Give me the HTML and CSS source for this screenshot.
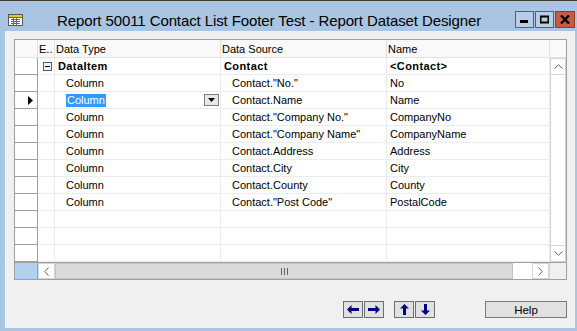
FILE: index.html
```html
<!DOCTYPE html>
<html lang="en">
<head>
  <meta charset="UTF-8" />
  <title>Report Dataset Designer</title>
  <link rel="stylesheet" href="styles.css">
</head>
<body>
  <div class="window">
    <div class="titlebar">
      <svg class="app-icon" width="15" height="12" viewBox="0 0 15 12">
        <rect x="0.5" y="0.5" width="14" height="11" fill="#fff" stroke="#5a5a5a"/>
        <rect x="1" y="1" width="13" height="2" fill="#f2c230"/>
        <path d="M1 3.5h13M3 5.5h9M3 7.5h9M3 9.5h9M5.5 4v7M8.5 4v7" stroke="#6a6a6a" stroke-width="1"/>
      </svg>
      <span class="title">Report 50011 Contact List Footer Test - Report Dataset Designer</span>
      <div class="caption-buttons">
        <span class="cap-btn"><svg width="9" height="9" viewBox="0 0 9 9"><rect x="0" y="5" width="8" height="3" fill="#000"/></svg></span>
        <span class="cap-btn"><svg width="9" height="9" viewBox="0 0 9 9"><rect x="0.5" y="1.5" width="8" height="6" fill="none" stroke="#000" stroke-width="2"/></svg></span>
        <span class="cap-btn close"><svg width="10" height="9" viewBox="0 0 10 9"><path d="M1 0.5l8 8M9 0.5l-8 8" stroke="#000" stroke-width="2.4"/></svg></span>
      </div>
    </div>

    <div class="client">
      <div class="grid">
        <div class="grid-main">
          <div class="grid-rows">
            <div class="row header">
              <div class="cell sel"></div>
              <div class="cell">E..</div>
              <div class="cell">Data Type</div>
              <div class="cell">Data Source</div>
              <div class="cell">Name</div>
            </div>

            <div class="row">
              <div class="cell sel"></div>
              <div class="cell expander">
                <svg width="9" height="9" viewBox="0 0 9 9">
                  <rect x="0.5" y="0.5" width="8" height="8" fill="#eef2f8" stroke="#4b5a78"/>
                  <rect x="2" y="4" width="5" height="1" fill="#000"/>
                </svg>
              </div>
              <div class="cell bold">DataItem</div>
              <div class="cell bold">Contact</div>
              <div class="cell bold">&lt;Contact&gt;</div>
            </div>

            <div class="row">
              <div class="cell sel"></div><div class="cell"></div>
              <div class="cell indent">Column</div>
              <div class="cell indent">Contact."No."</div>
              <div class="cell">No</div>
            </div>

            <div class="row">
              <div class="cell sel current">
                <svg width="5" height="9" viewBox="0 0 5 9"><path d="M0 0l5 4.5L0 9z" fill="#000"/></svg>
              </div>
              <div class="cell"></div>
              <div class="cell indent editing">
                <span class="highlight">Column</span>
                <span class="drop-btn"><svg width="7" height="4" viewBox="0 0 7 4"><path d="M0 0h7L3.5 4z" fill="#000"/></svg></span>
              </div>
              <div class="cell indent">Contact.Name</div>
              <div class="cell">Name</div>
            </div>

            <div class="row">
              <div class="cell sel"></div><div class="cell"></div>
              <div class="cell indent">Column</div>
              <div class="cell indent">Contact."Company No."</div>
              <div class="cell">CompanyNo</div>
            </div>

            <div class="row">
              <div class="cell sel"></div><div class="cell"></div>
              <div class="cell indent">Column</div>
              <div class="cell indent">Contact."Company Name"</div>
              <div class="cell">CompanyName</div>
            </div>

            <div class="row">
              <div class="cell sel"></div><div class="cell"></div>
              <div class="cell indent">Column</div>
              <div class="cell indent">Contact.Address</div>
              <div class="cell">Address</div>
            </div>

            <div class="row">
              <div class="cell sel"></div><div class="cell"></div>
              <div class="cell indent">Column</div>
              <div class="cell indent">Contact.City</div>
              <div class="cell">City</div>
            </div>

            <div class="row">
              <div class="cell sel"></div><div class="cell"></div>
              <div class="cell indent">Column</div>
              <div class="cell indent">Contact.County</div>
              <div class="cell">County</div>
            </div>

            <div class="row">
              <div class="cell sel"></div><div class="cell"></div>
              <div class="cell indent">Column</div>
              <div class="cell indent">Contact."Post Code"</div>
              <div class="cell">PostalCode</div>
            </div>

            <div class="row">
              <div class="cell sel"></div><div class="cell"></div><div class="cell"></div><div class="cell"></div><div class="cell"></div>
            </div>
            <div class="row">
              <div class="cell sel"></div><div class="cell"></div><div class="cell"></div><div class="cell"></div><div class="cell"></div>
            </div>
            <div class="row">
              <div class="cell sel"></div><div class="cell"></div><div class="cell"></div><div class="cell"></div><div class="cell"></div>
            </div>
          </div>

          <div class="vscroll">
            <div class="vs-head"></div>
            <div class="vs-btn"><svg width="9" height="5" viewBox="0 0 9 5"><path d="M0.5 4.5L4.5 0.8L8.5 4.5" fill="none" stroke="#606060"/></svg></div>
            <div class="vs-track"></div>
            <div class="vs-btn"><svg width="9" height="5" viewBox="0 0 9 5"><path d="M0.5 0.5L4.5 4.2L8.5 0.5" fill="none" stroke="#606060"/></svg></div>
          </div>
        </div>

        <div class="hscroll">
          <div class="hs-sel"></div>
          <div class="hs-btn"><svg width="5" height="9" viewBox="0 0 5 9"><path d="M4.5 0.5L0.8 4.5L4.5 8.5" fill="none" stroke="#606060"/></svg></div>
          <div class="hs-thumb"><span class="grip"></span></div>
          <div class="hs-track"></div>
          <div class="hs-btn"><svg width="5" height="9" viewBox="0 0 5 9"><path d="M0.5 0.5L4.2 4.5L0.5 8.5" fill="none" stroke="#606060"/></svg></div>
          <div class="hs-corner"></div>
        </div>
      </div>

      <div class="footer">
        <div class="nav-group">
          <span class="nav-btn"><svg width="12" height="9" viewBox="0 0 12 9"><path d="M0 4.5L4.5 0V3H12V6H4.5V9z" fill="#000080"/></svg></span>
          <span class="nav-btn"><svg width="12" height="9" viewBox="0 0 12 9"><path d="M12 4.5L7.5 0V3H0V6H7.5V9z" fill="#000080"/></svg></span>
        </div>
        <div class="nav-group">
          <span class="nav-btn"><svg width="9" height="11" viewBox="0 0 9 11"><path d="M4.5 0L9 4.5H6V11H3V4.5H0z" fill="#000080"/></svg></span>
          <span class="nav-btn"><svg width="9" height="11" viewBox="0 0 9 11"><path d="M4.5 11L9 6.5H6V0H3V6.5H0z" fill="#000080"/></svg></span>
        </div>
        <span class="help-btn">Help</span>
      </div>
    </div>
  </div>
</body>
</html>
```

FILE: styles.css
```css
:root {
  --frame: #a9c5e2;
  --client: #f0f0f0;
  --grid-line: #a0a0a0;
  --cell-line: #ececec;
  --text: #000000;
}

body {
  margin: 0;
  font-family: "Liberation Sans", Arial, sans-serif;
  color: var(--text);
}

.window {
  width: 577px;
  height: 331px;
  box-sizing: border-box;
  background-color: var(--frame);
  border-top: 1px solid #3c3c3c;
  display: flex;
  flex-direction: column;
  overflow: hidden;
}

.titlebar {
  height: 30px;
  display: flex;
  align-items: center;
}

.app-icon {
  margin-left: 8px;
  margin-top: 7px;
}

.title {
  margin-left: 34px;
  margin-top: 9px;
  font-size: 15px;
  letter-spacing: -0.1px;
  white-space: nowrap;
}

.caption-buttons {
  margin-left: auto;
  margin-right: 2px;
  margin-top: 7px;
  display: flex;
  gap: 1px;
}

.cap-btn {
  width: 19px;
  height: 17px;
  box-sizing: border-box;
  border: 1px solid #4a6183;
  background-color: #b8cee7;
  display: flex;
  align-items: center;
  justify-content: center;
}

.cap-btn.close {
  width: 20px;
  background-color: #c85a45;
  border-color: #8e3b2c;
}

.client {
  flex: 1;
  margin: 0 2px 3px 5px;
  background-color: var(--client);
  padding: 8px 0 0 9px;
  font-size: 11px;
}

.grid {
  width: 551px;
  border: 1px solid var(--grid-line);
  background-color: #fff;
}

.grid-main {
  display: flex;
}

.row {
  display: grid;
  grid-template-columns: 23px 17px 166px 166px 163px;
  height: 17px;
}

.row.header {
  height: 18px;
}

.cell {
  box-sizing: border-box;
  border-right: 1px solid var(--cell-line);
  border-bottom: 1px solid var(--cell-line);
  padding-left: 3px;
  line-height: 16px;
  white-space: nowrap;
  overflow: hidden;
  display: flex;
  align-items: center;
}

.cell.sel {
  border-right-color: var(--grid-line);
  border-bottom-color: var(--grid-line);
  padding-left: 0;
}

.cell.current {
  padding-left: 13px;
}

.cell.indent {
  padding-left: 11px;
}

.cell.bold {
  font-weight: bold;
  letter-spacing: 0.4px;
}

.cell.expander {
  padding-left: 5px;
}

.header .cell {
  background-color: #f9f9f9;
  border-right-color: #e2e2e2;
  border-bottom-color: #e2e2e2;
  padding-left: 1px;
}

.header .cell.sel {
  border-right-color: #e2e2e2;
}

.editing {
  padding-left: 10px;
}

.highlight {
  background-color: #3399ff;
  color: #fff;
  padding: 0 1px;
  line-height: 13px;
}

.drop-btn {
  margin-left: auto;
  margin-right: 1px;
  width: 15px;
  height: 12px;
  box-sizing: border-box;
  border: 1px solid #808080;
  background-color: #e8e8e8;
  display: flex;
  align-items: center;
  justify-content: center;
}

.vscroll {
  width: 16px;
  display: flex;
  flex-direction: column;
}

.vs-head {
  height: 18px;
  box-sizing: border-box;
  background-color: #f9f9f9;
  border-bottom: 1px solid #e2e2e2;
}

.vs-btn {
  height: 17px;
  box-sizing: border-box;
  border: 1px solid #d4d4d4;
  background-color: #fff;
  display: flex;
  align-items: center;
  justify-content: center;
}

.vs-track {
  flex: 1;
  border-left: 1px solid #d4d4d4;
  border-right: 1px solid #d4d4d4;
  background-color: #fff;
}

.hscroll {
  display: flex;
  height: 16px;
  border-top: 1px solid var(--grid-line);
}

.hs-sel {
  width: 22px;
  background-color: #b2d1f0;
  border-right: 1px solid var(--grid-line);
}

.hs-btn {
  width: 17px;
  box-sizing: border-box;
  border: 1px solid #d4d4d4;
  background-color: #fff;
  display: flex;
  align-items: center;
  justify-content: center;
}

.hs-thumb {
  width: 458px;
  box-sizing: border-box;
  background-color: #dadada;
  border: 1px solid #c4c4c4;
  display: flex;
  align-items: center;
  justify-content: center;
}

.grip {
  width: 7px;
  height: 7px;
  background: repeating-linear-gradient(90deg, #606060 0 1px, transparent 1px 3px);
}

.hs-track {
  width: 19px;
  background-color: #fff;
}

.hs-corner {
  flex: 1;
  background-color: var(--client);
  border-left: 1px solid #d4d4d4;
}

.footer {
  width: 553px;
  margin-top: 21px;
  display: flex;
  justify-content: flex-end;
}

.nav-group {
  display: flex;
  gap: 1px;
  margin-right: 10px;
}

.nav-group + .nav-group {
  margin-right: 50px;
}

.nav-btn {
  width: 20px;
  height: 17px;
  box-sizing: border-box;
  border: 1px solid #6e6e6e;
  background-color: #e1e1e1;
  display: flex;
  align-items: center;
  justify-content: center;
}

.help-btn {
  width: 82px;
  height: 17px;
  box-sizing: border-box;
  border: 1px solid #7a7a7a;
  background-color: #e1e1e1;
  font-size: 11.5px;
  display: flex;
  align-items: center;
  justify-content: center;
}
```
